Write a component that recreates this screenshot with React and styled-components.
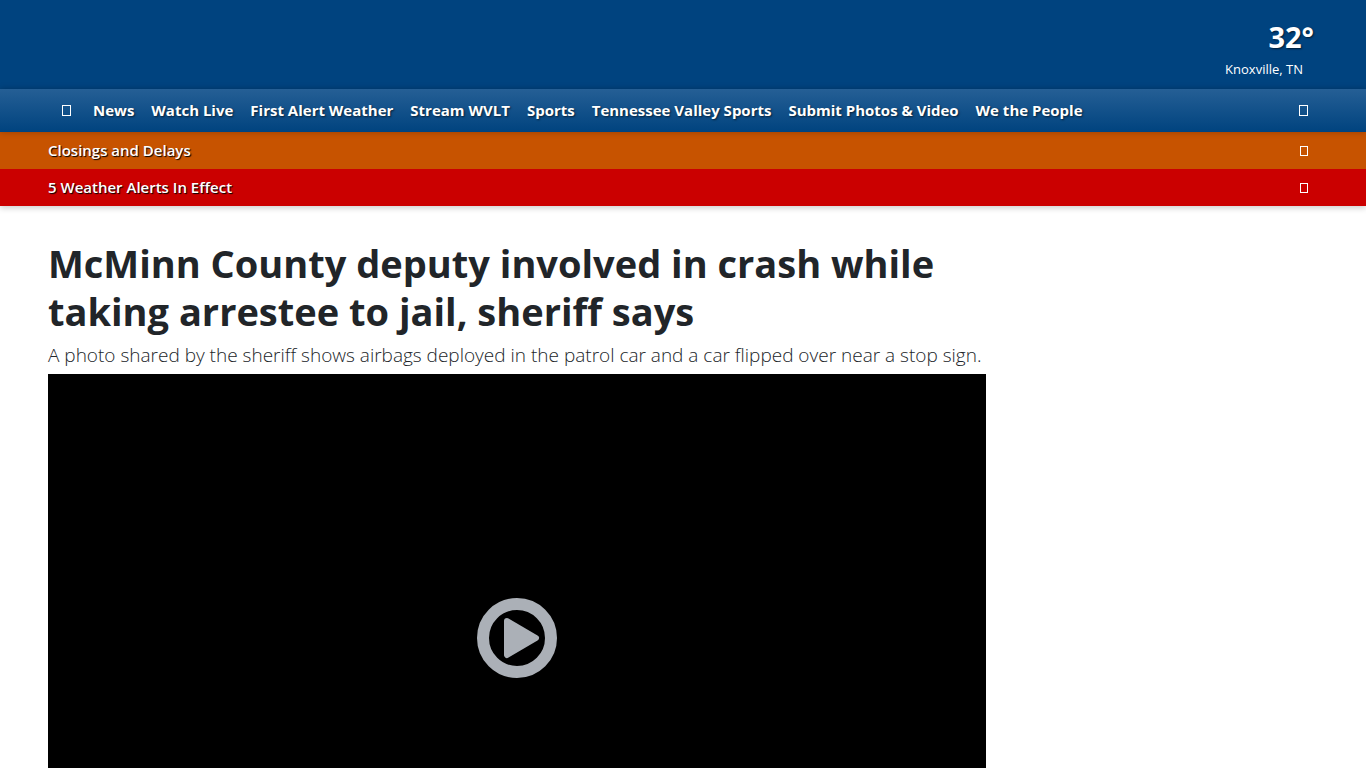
import React from "react"
import styled, { createGlobalStyle } from "styled-components"

const NAV_ITEMS = [
  "News",
  "Watch Live",
  "First Alert Weather",
  "Stream WVLT",
  "Sports",
  "Tennessee Valley Sports",
  "Submit Photos & Video",
  "We the People",
]

const ALERTS = [
  { title: "Closings and Delays", color: "#c75300" },
  { title: "5 Weather Alerts In Effect", color: "#cb0000" },
]

const GlobalStyle = createGlobalStyle`
  *, *::before, *::after {
    box-sizing: border-box;
  }

  body {
    margin: 0;
    background: #fff;
    color: #212529;
    font-family: "Open Sans", "Noto Sans", sans-serif;
  }
`

const Header = styled.header`
  box-shadow: 0 2px 6px rgba(0, 0, 0, 0.2);
`

const Masthead = styled.div`
  display: flex;
  justify-content: flex-end;
  padding: 15px 52px 9px;
  background: #00437f;
  color: #fff;
`

const Weather = styled.a`
  display: flex;
  flex-direction: column;
  align-items: flex-end;
  color: inherit;
  text-decoration: none;
`

const Temperature = styled.span`
  font-size: 29px;
  font-weight: 700;
  line-height: 44px;
  text-shadow: 1px 1px 2px rgba(0, 0, 0, 0.6);
`

const Place = styled.span`
  padding-right: 11px;
  font-size: 13px;
  line-height: 21px;
`

const Nav = styled.nav`
  position: relative;
  display: flex;
  align-items: center;
  justify-content: space-between;
  height: 43px;
  padding: 0 48px;
  background: linear-gradient(#255f95, #00437f);
  box-shadow: 0 0 6px rgba(0, 0, 0, 0.25);
`

const NavList = styled.ul`
  display: flex;
  align-items: center;
  gap: 17px;
  margin: 0;
  padding: 0;
  list-style: none;
`

const NavLink = styled.a`
  display: block;
  padding-bottom: 2px;
  color: #fff;
  font-size: 15px;
  font-weight: 700;
  line-height: 24px;
  text-decoration: none;
  text-shadow: 1px 1px 2px rgba(0, 0, 0, 0.6);
`

const IconButton = styled.button`
  display: flex;
  align-items: center;
  justify-content: center;
  height: 32px;
  padding: ${props => (props.$menu ? "0 5px 0 14px" : "0 10px")};
  border: 0;
  background: none;
  color: #fff;
  cursor: pointer;
`

const Glyph = styled.span`
  width: ${props => (props.$small ? 8 : 9)}px;
  height: ${props => (props.$small ? 10 : 11)}px;
  border: 1px solid currentColor;
`

const AlertBar = styled.div`
  display: flex;
  align-items: center;
  justify-content: space-between;
  height: 37px;
  padding: 0 48px;
  background: ${props => props.$color};
`

const AlertLink = styled.a`
  padding-bottom: 2px;
  color: #fff;
  font-size: 15px;
  font-weight: 600;
  line-height: 24px;
  text-decoration: none;
  text-shadow: 1px 1px 1px #000;
`

const Page = styled.main`
  display: grid;
  grid-template-columns: minmax(0, 1fr) 300px;
  gap: 32px;
  padding: 33px 48px 48px;
`

const Headline = styled.h1`
  margin: 0;
  font-size: 38px;
  font-weight: 700;
  line-height: 48px;
`

const Summary = styled.p`
  margin: 5px 0 4px;
  font-size: 19px;
  font-weight: 300;
  line-height: 30px;
`

const Video = styled.div`
  display: flex;
  align-items: center;
  justify-content: center;
  aspect-ratio: 16 / 9;
  background: #000;
`

const PlayButton = styled.button`
  display: block;
  padding: 0;
  border: 0;
  background: none;
  color: #abb0b7;
  cursor: pointer;

  svg {
    display: block;
  }
`

const PlayIcon = () => (
  <svg width="80" height="80" viewBox="0 0 80 80" aria-hidden="true">
    <circle cx="40" cy="40" r="34" fill="none" stroke="currentColor" strokeWidth="12" />
    <path
      d="M30 23 L59 40 L30 57 Z"
      fill="currentColor"
      stroke="currentColor"
      strokeWidth="6"
      strokeLinejoin="round"
    />
  </svg>
)

const App = () => (
  <>
    <GlobalStyle />
    <Header>
      <Masthead>
        <Weather href="#weather">
          <Temperature>32°</Temperature>
          <Place>Knoxville, TN</Place>
        </Weather>
      </Masthead>
      <Nav>
        <NavList>
          <li>
            <IconButton $menu aria-label="Menu">
              <Glyph />
            </IconButton>
          </li>
          {NAV_ITEMS.map(item => (
            <li key={item}>
              <NavLink href="#nav">{item}</NavLink>
            </li>
          ))}
        </NavList>
        <IconButton aria-label="Search">
          <Glyph />
        </IconButton>
      </Nav>
      {ALERTS.map(alert => (
        <AlertBar key={alert.title} $color={alert.color}>
          <AlertLink href="#alerts">{alert.title}</AlertLink>
          <IconButton aria-label={`Open ${alert.title}`}>
            <Glyph $small />
          </IconButton>
        </AlertBar>
      ))}
    </Header>
    <Page>
      <article>
        <Headline>McMinn County deputy involved in crash while taking arrestee to jail, sheriff says</Headline>
        <Summary>
          A photo shared by the sheriff shows airbags deployed in the patrol car and a car flipped over near a stop sign.
        </Summary>
        <Video>
          <PlayButton aria-label="Play video">
            <PlayIcon />
          </PlayButton>
        </Video>
      </article>
    </Page>
  </>
)

export default App
